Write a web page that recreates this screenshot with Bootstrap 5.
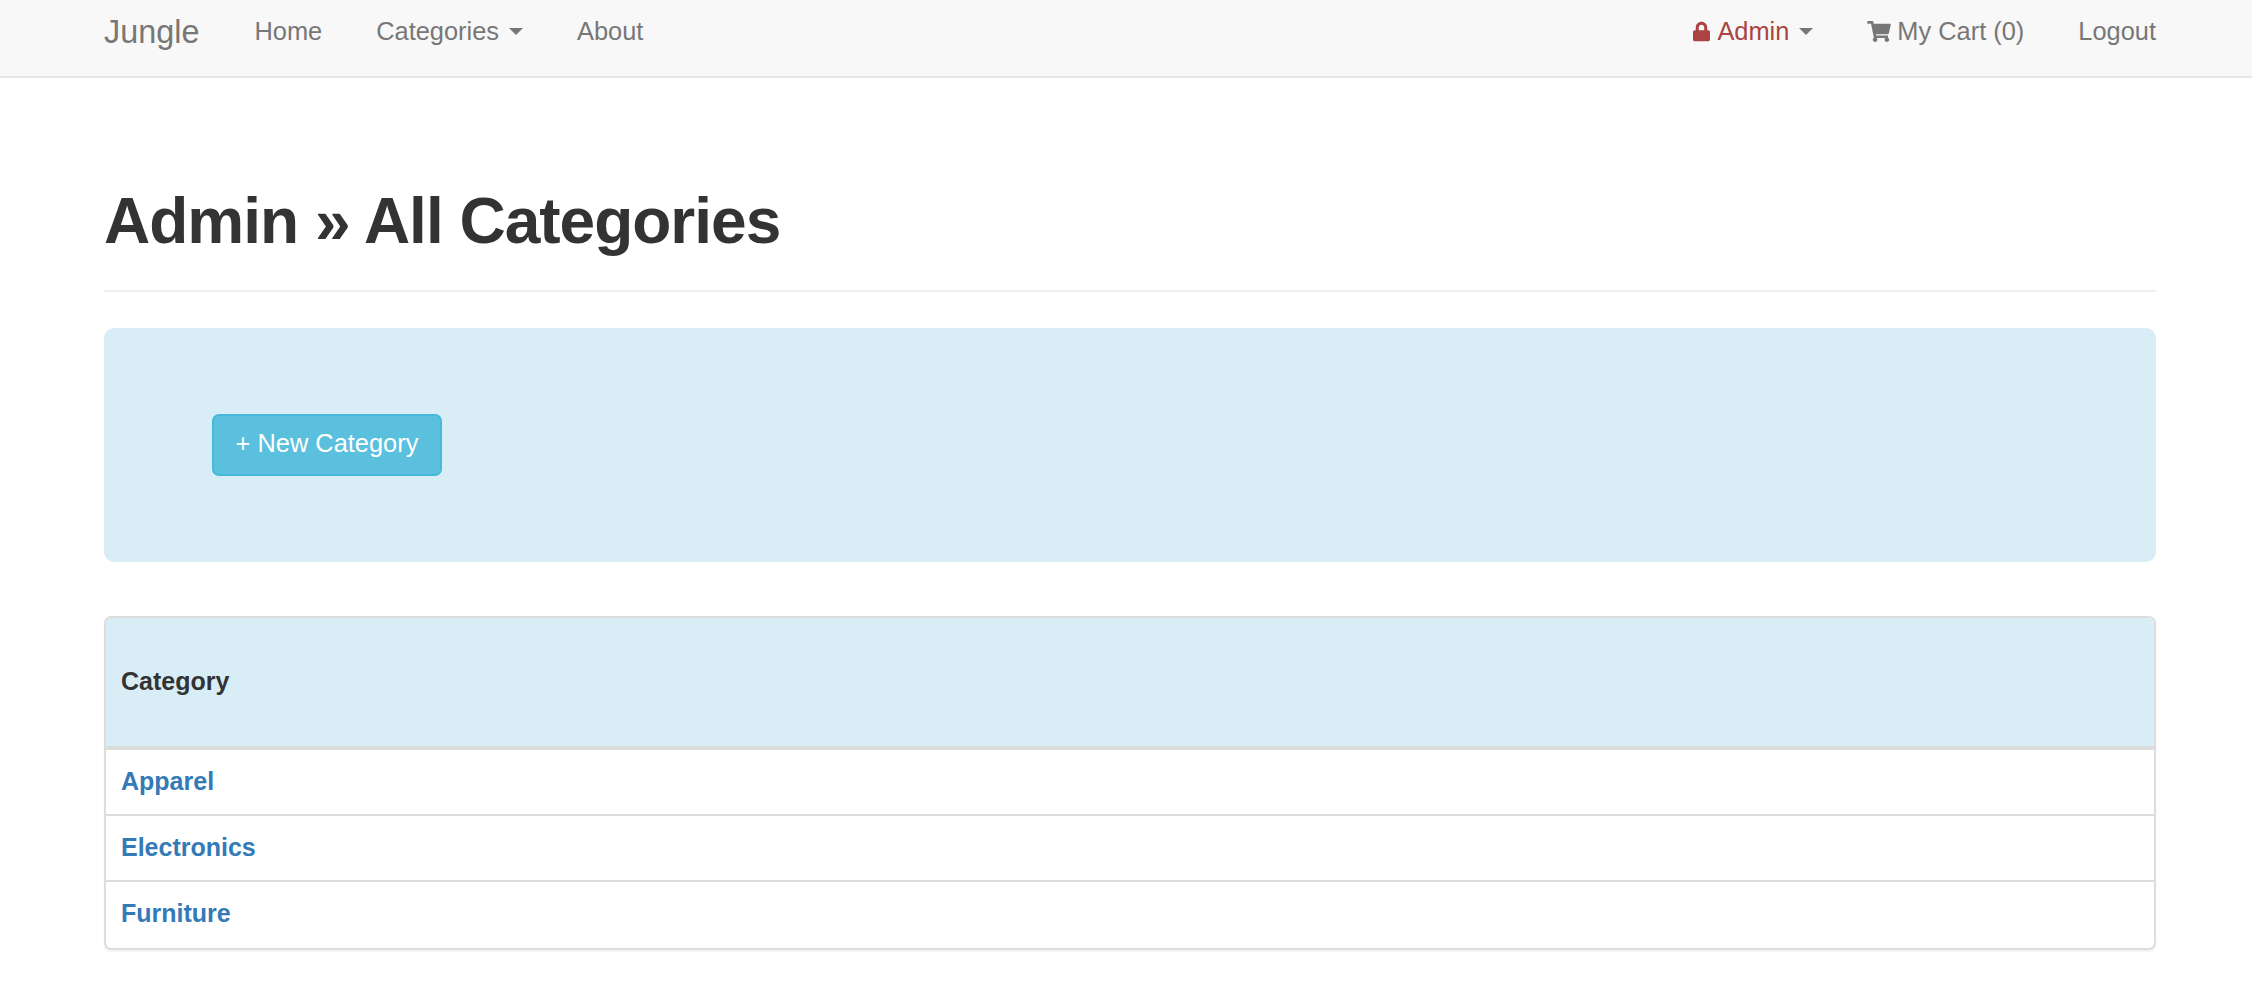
<!DOCTYPE html>
<html lang="en">
<head>
<meta charset="utf-8">
<title>Jungle</title>
<link href="https://cdn.jsdelivr.net/npm/bootstrap@5.3.0/dist/css/bootstrap.min.css" rel="stylesheet">
<style>
html, body { height: 100%; }
body { font-family: "Liberation Sans", Arial, sans-serif; font-size: 25px; color: #333; background: #fff; overflow: hidden; }
.top-bar { background: #f8f8f8; border-bottom: 2px solid #e7e7e7; height: 78px; padding: 0 96px 0 104px; align-items: flex-start; flex-wrap: nowrap; }
.top-bar .navbar-brand { font-size: 32.4px; line-height: 32px; color: #777; padding: 16px 0 0; margin: 0 28px 0 0; }
.top-bar .navbar-nav .nav-link { font-size: 25.4px; line-height: 36px; color: #777; padding: 13px 27px 0; display: flex; align-items: center; }
.top-bar .navbar-nav .nav-link.nav-alert { color: #a94442; }
.top-bar .nav-end .nav-item:last-child .nav-link { padding-right: 0; }
.top-bar .dropdown-toggle::after { margin-left: 10px; color: #777; border-top: 7px solid; border-right: 7px solid transparent; border-left: 7px solid transparent; border-bottom: 0; vertical-align: middle; }
.ico { fill: currentColor; flex: none; }
.ico-lock { width: 17px; height: 21px; margin-right: 7px; }
.ico-cart { width: 24px; height: 21px; margin-right: 6px; }
.page-wrap { padding: 0 96px 0 104px; }
.page-title { font-size: 64px; line-height: 71px; font-weight: 700; letter-spacing: -1px; color: #333; margin: 108px 0 0; padding: 0 0 33px; border-bottom: 2px solid #eee; }
.hero { background: #d9edf7; border-radius: 10px; margin-top: 36px; height: 234px; padding: 0 108px; display: flex; align-items: center; }
.hero .btn-new { font-size: 25.4px; line-height: 36px; width: 230px; height: 62px; padding: 9px 0; color: #fff; background: #5bc0de; border: 2px solid #46b8da; border-radius: 7px; white-space: nowrap; }
.data-frame { margin-top: 54px; border: 2px solid #ddd; border-radius: 7px; overflow: hidden; box-shadow: 0 2px 2px rgba(0,0,0,.05); }
.data-frame .table { margin: 0; --bs-table-bg: transparent; font-size: 25px; }
.data-frame th { background: #d9edf7; color: #333; height: 130px; vertical-align: middle; padding: 0 15px; border-bottom: 4px solid #ddd; font-weight: 700; }
.data-frame td { height: 66px; vertical-align: middle; padding: 0 15px; border-bottom: 2px solid #ddd; }
.data-frame tr:first-child td { height: 67px; }
.data-frame tr:last-child td { border-bottom: 0; height: 67px; padding-bottom: 3px; }
.data-frame a { color: #337ab7; font-weight: 700; text-decoration: none; }
</style>
</head>
<body>
<nav class="navbar navbar-expand top-bar justify-content-between">
  <div class="d-flex">
    <a class="navbar-brand" href="#">Jungle</a>
    <ul class="navbar-nav">
      <li class="nav-item"><a class="nav-link" href="#">Home</a></li>
      <li class="nav-item dropdown"><a class="nav-link dropdown-toggle" href="#">Categories</a></li>
      <li class="nav-item"><a class="nav-link" href="#">About</a></li>
    </ul>
  </div>
  <ul class="navbar-nav nav-end">
    <li class="nav-item dropdown"><a class="nav-link nav-alert dropdown-toggle" href="#"><svg class="ico ico-lock" viewBox="0 0 448 512"><path d="M400 224h-24v-72C376 68.2 307.8 0 224 0S72 68.2 72 152v72H48c-26.5 0-48 21.5-48 48v192c0 26.5 21.5 48 48 48h352c26.5 0 48-21.5 48-48V272c0-26.5-21.5-48-48-48zm-104 0H152v-72c0-39.7 32.3-72 72-72s72 32.3 72 72v72z"/></svg>Admin</a></li>
    <li class="nav-item"><a class="nav-link" href="#"><svg class="ico ico-cart" viewBox="0 0 576 512"><path d="M528.12 301.319l47.273-208C578.806 78.301 567.391 64 551.99 64H159.208l-9.166-44.81C147.758 8.021 137.93 0 126.529 0H24C10.745 0 0 10.745 0 24v16c0 13.255 10.745 24 24 24h69.883l70.248 343.435C147.325 417.1 136 435.222 136 456c0 30.928 25.072 56 56 56s56-25.072 56-56c0-15.674-6.447-29.835-16.824-40h209.647C430.447 426.165 424 440.326 424 456c0 30.928 25.072 56 56 56s56-25.072 56-56c0-22.172-12.888-41.332-31.579-50.405l5.517-24.276c3.413-15.018-8.002-29.319-23.403-29.319H218.117l-6.545-32h293.145c11.206 0 20.92-7.754 23.403-18.681z"/></svg>My Cart (0)</a></li>
    <li class="nav-item"><a class="nav-link" href="#">Logout</a></li>
  </ul>
</nav>
<main class="page-wrap">
  <h1 class="page-title">Admin » All Categories</h1>
  <div class="hero"><a class="btn btn-new" href="#">+ New Category</a></div>
  <div class="data-frame">
    <table class="table">
      <thead><tr><th>Category</th></tr></thead>
      <tbody>
        <tr><td><a href="#">Apparel</a></td></tr>
        <tr><td><a href="#">Electronics</a></td></tr>
        <tr><td><a href="#">Furniture</a></td></tr>
      </tbody>
    </table>
  </div>
</main>
<script src="https://cdn.jsdelivr.net/npm/bootstrap@5.3.0/dist/js/bootstrap.bundle.min.js"></script>
</body>
</html>
